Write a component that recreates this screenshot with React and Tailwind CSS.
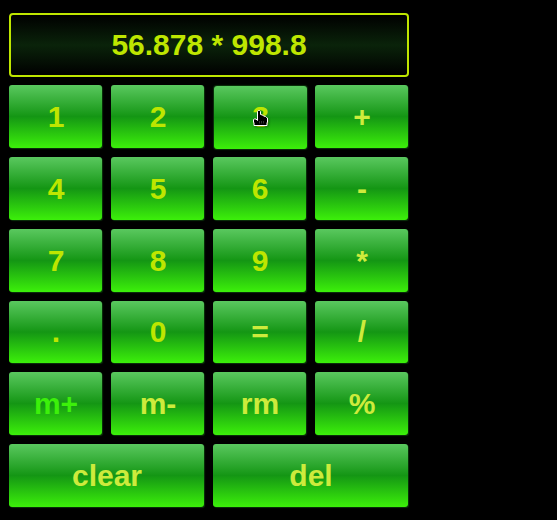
const yellow = 'text-[#bee600]';
const lime = 'text-[#cdeb3c]';

const keys = [
  ['1', yellow], ['2', yellow], ['3', yellow], ['+', lime],
  ['4', yellow], ['5', yellow], ['6', yellow], ['-', lime],
  ['7', yellow], ['8', yellow], ['9', yellow], ['*', lime],
  ['.', yellow], ['0', yellow], ['=', lime], ['/', lime],
  ['m+', 'text-[#3cf00a]'], ['m-', lime], ['rm', lime], ['%', lime],
  ['clear', lime, true], ['del', lime, true],
];

function HandCursor() {
  return (
    <svg className="absolute left-[39px] top-[24px] drop-shadow-[1px_1px_1px_rgba(0,0,0,0.4)]" width="16" height="17" viewBox="0 0 16 17">
      <path d="M4.5 1.5l1-1 1 0 1 1v3l2 .5 1 1 2 .5 1 1 1 .5V12l-.5 1v2.5H1V13l-.5-1V9.5l1-.5h1.5l1.5 1.5z" fill="#000" stroke="#fff" strokeLinejoin="round" />
      <path d="M6.5 11v2.5M8.5 11v2.5M10.5 11v2.5" stroke="#555" strokeWidth=".6" />
    </svg>
  );
}

function Key({ label, color, wide }) {
  const pressed = label === '3';
  return (
    <button
      className={`relative flex h-[62.8px] items-center justify-center rounded-[3px] bg-linear-to-b/srgb from-[#5ac85f] via-[#149614] to-[#3cf00a] text-[30px] font-bold leading-[34px] ${color} ${wide ? 'col-span-2' : ''} ${pressed ? 'translate-x-px translate-y-px cursor-pointer pb-[1.3px] shadow-[0_0_1px_1px_#0a320a]' : 'pl-px pt-[0.7px] shadow-[1px_1px_1px_#0a320a]'}`}
    >
      {label}
      {pressed && <HandCursor />}
    </button>
  );
}

export default function App() {
  return (
    <main className="h-[520px] w-full overflow-hidden bg-black pl-[9px] pt-[13px] font-['Liberation_Sans',Arial,sans-serif]">
      <div className="flex h-16 w-[400px] items-center justify-center rounded-[4px] border-2 border-[#bee600] bg-linear-to-b/srgb from-black via-[#0a230a] to-black pb-[2px] text-[30px] font-bold text-[#bee600]">
        56.878 * 998.8
      </div>
      <div className="mt-[8.2px] grid w-[399px] grid-cols-4 gap-[9px]">
        {keys.map(([label, color, wide]) => (
          <Key key={label} label={label} color={color} wide={wide} />
        ))}
      </div>
    </main>
  );
}
